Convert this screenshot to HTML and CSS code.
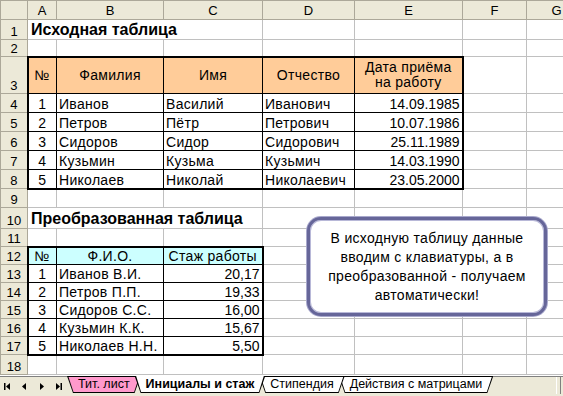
FILE: index.html
```html
<!DOCTYPE html>
<html lang="ru">
<head>
    <meta charset="UTF-8">
    <title>Инициалы и стаж</title>
    <link rel="stylesheet" href="styles.css">
</head>
<body>
    <div class="sheet">
        <table class="grid">
            <colgroup>
                <col class="w-hdr"><col class="w-a"><col class="w-b"><col class="w-c">
                <col class="w-d"><col class="w-e"><col class="w-f"><col class="w-g">
            </colgroup>
            <tr class="h19">
                <th class="corner"></th>
                <th class="colh">A</th><th class="colh">B</th><th class="colh">C</th>
                <th class="colh">D</th><th class="colh">E</th><th class="colh">F</th><th class="colh">G</th>
            </tr>
            <tr class="h20">
                <th class="rowh">1</th>
                <td colspan="3" class="title">Исходная таблица</td>
                <td></td><td></td><td></td><td></td>
            </tr>
            <tr class="h17">
                <th class="rowh">2</th>
                <td></td><td></td><td></td><td></td><td></td><td></td><td></td>
            </tr>
            <tr class="h37">
                <th class="rowh">3</th>
                <td class="t head1 top left">№</td>
                <td class="t head1 top">Фамилия</td>
                <td class="t head1 top">Имя</td>
                <td class="t head1 top">Отчество</td>
                <td class="t head1 top right two">Дата приёма<br>на работу</td>
                <td></td><td></td>
            </tr>
            <tr class="h19">
                <th class="rowh">4</th>
                <td class="t num left">1</td><td class="t">Иванов</td><td class="t">Василий</td>
                <td class="t">Иванович</td><td class="t val right">14.09.1985</td><td></td><td></td>
            </tr>
            <tr class="h19">
                <th class="rowh">5</th>
                <td class="t num left">2</td><td class="t">Петров</td><td class="t">Пётр</td>
                <td class="t">Петрович</td><td class="t val right">10.07.1986</td><td></td><td></td>
            </tr>
            <tr class="h19">
                <th class="rowh">6</th>
                <td class="t num left">3</td><td class="t">Сидоров</td><td class="t">Сидор</td>
                <td class="t">Сидорович</td><td class="t val right">25.11.1989</td><td></td><td></td>
            </tr>
            <tr class="h19">
                <th class="rowh">7</th>
                <td class="t num left">4</td><td class="t">Кузьмин</td><td class="t">Кузьма</td>
                <td class="t">Кузьмич</td><td class="t val right">14.03.1990</td><td></td><td></td>
            </tr>
            <tr class="h19">
                <th class="rowh">8</th>
                <td class="t num left bottom">5</td><td class="t bottom">Николаев</td><td class="t bottom">Николай</td>
                <td class="t bottom">Николаевич</td><td class="t val right bottom">23.05.2000</td><td></td><td></td>
            </tr>
            <tr class="h19">
                <th class="rowh">9</th>
                <td></td><td></td><td></td><td></td><td></td><td></td><td></td>
            </tr>
            <tr class="h21">
                <th class="rowh">10</th>
                <td colspan="3" class="title">Преобразованная таблица</td>
                <td></td><td></td><td></td><td></td>
            </tr>
            <tr class="h18">
                <th class="rowh">11</th>
                <td></td><td></td><td></td><td></td><td></td><td></td><td></td>
            </tr>
            <tr class="h18">
                <th class="rowh">12</th>
                <td class="t head2 top left">№</td>
                <td class="t head2 top">Ф.И.О.</td>
                <td class="t head2 top right">Стаж работы</td>
                <td></td><td></td><td></td><td></td>
            </tr>
            <tr class="h18">
                <th class="rowh">13</th>
                <td class="t num left">1</td><td class="t">Иванов В.И.</td><td class="t val right">20,17</td>
                <td></td><td></td><td></td><td></td>
            </tr>
            <tr class="h18">
                <th class="rowh">14</th>
                <td class="t num left">2</td><td class="t">Петров П.П.</td><td class="t val right">19,33</td>
                <td></td><td></td><td></td><td></td>
            </tr>
            <tr class="h18">
                <th class="rowh">15</th>
                <td class="t num left">3</td><td class="t">Сидоров С.С.</td><td class="t val right">16,00</td>
                <td></td><td></td><td></td><td></td>
            </tr>
            <tr class="h18">
                <th class="rowh">16</th>
                <td class="t num left">4</td><td class="t">Кузьмин К.К.</td><td class="t val right">15,67</td>
                <td></td><td></td><td></td><td></td>
            </tr>
            <tr class="h18">
                <th class="rowh">17</th>
                <td class="t num left bottom">5</td><td class="t bottom">Николаев Н.Н.</td><td class="t val right bottom">5,50</td>
                <td></td><td></td><td></td><td></td>
            </tr>
            <tr class="h20">
                <th class="rowh">18</th>
                <td></td><td></td><td></td><td></td><td></td><td></td><td></td>
            </tr>
        </table>

        <div class="callout">
            В исходную таблицу данные<br>
            вводим с клавиатуры, а в<br>
            преобразованной - получаем<br>
            автоматически!
        </div>
    </div>

    <div class="tabbar">
        <div class="nav">
            <svg width="9" height="9" viewBox="0 0 9 9"><rect x="1" y="1" width="1.5" height="7" fill="#000"/><path d="M7 1 L3 4.5 L7 8 Z" fill="#000"/></svg>
            <svg width="9" height="9" viewBox="0 0 9 9"><path d="M6 1 L2 4.5 L6 8 Z" fill="#000"/></svg>
            <svg width="9" height="9" viewBox="0 0 9 9"><path d="M3 1 L7 4.5 L3 8 Z" fill="#000"/></svg>
            <svg width="9" height="9" viewBox="0 0 9 9"><path d="M2 1 L6 4.5 L2 8 Z" fill="#000"/><rect x="6.5" y="1" width="1.5" height="7" fill="#000"/></svg>
        </div>
        <div class="tabs">
            <div class="tab pink z4">Тит. лист</div>
            <div class="tab active">Инициалы и стаж</div>
            <div class="tab z2">Стипендия</div>
            <div class="tab z1">Действия с матрицами</div>
        </div>
        <div class="splitter"></div>
    </div>
</body>
</html>
```

FILE: styles.css
```css
html, body {
    margin: 0;
    width: 563px;
    height: 396px;
    overflow: hidden;
    background-color: white;
    font-family: "Liberation Sans", Arial, sans-serif;
    font-size: 13px;
    color: black;
}
.sheet {
    position: relative;
    height: 376px;
    overflow: hidden;
}
.grid {
    border-collapse: collapse;
    table-layout: fixed;
    width: 586px;
}
.w-hdr { width: 27px; }
.w-a { width: 29px; }
.w-b { width: 107px; }
.w-c { width: 99px; }
.w-d { width: 92px; }
.w-e { width: 108px; }
.w-f { width: 64px; }
.w-g { width: 60px; }

.h17 { height: 17px; }
.h18 { height: 18px; }
.h19 { height: 19px; }
.h20 { height: 20px; }
.h21 { height: 21px; }
.h37 { height: 37px; }

td, th {
    border: 1px solid #c0c0c0;
    padding: 0 2px;
    white-space: nowrap;
    overflow: hidden;
    line-height: 15px;
    vertical-align: bottom;
    font-weight: normal;
}
td {
    font-size: 14px;
    letter-spacing: 0.3px;
}
.corner, .colh, .rowh {
    background-color: #ece9d8;
    border-color: #aca899;
    text-align: center;
}
.colh {
    vertical-align: middle;
}
.title {
    font-weight: bold;
    font-size: 16px;
    letter-spacing: 0;
    line-height: 18px;
    padding-left: 3px;
}

/* table borders */
.t { border: 1px solid black; }
.t.top { border-top: 2px solid black; }
.t.bottom { border-bottom: 2px solid black; }
.t.left { border-left: 2px solid black; }
.t.right { border-right: 2px solid black; }

.head1 {
    background-color: #ffcc99;
    text-align: center;
    vertical-align: middle;
}
.head1.two { line-height: 15px; }
.head2 {
    background-color: #ccffff;
    text-align: center;
}
.num { text-align: center; }
.val {
    text-align: right;
    letter-spacing: 0;
}

.callout {
    position: absolute;
    left: 307px;
    top: 217px;
    width: 234px;
    height: 93px;
    border: 3px solid #666699;
    border-radius: 14px;
    box-shadow: 0 0 0 1px #a8a8cc, inset 0 0 0 1px #b8b8d8;
    background-color: white;
    display: flex;
    align-items: center;
    justify-content: center;
    text-align: center;
    font-size: 14px;
    letter-spacing: 0.3px;
    line-height: 19px;
}

/* sheet tabs */
.tabbar {
    display: flex;
    height: 20px;
    background-color: #ece9d8;
    border-top: 1px solid #808080;
    box-sizing: border-box;
    font-family: "Liberation Sans", Tahoma, sans-serif;
    font-size: 12.5px;
}
.nav {
    display: flex;
    align-items: center;
    gap: 8px;
    width: 64px;
    padding-left: 3px;
    box-sizing: border-box;
}
.tabs {
    display: flex;
    height: 17px;
    margin-top: -1px;
}
.tab {
    position: relative;
    padding: 0 11px;
    line-height: 17px;
    margin-left: -6px;
    z-index: 3;
}
.tab::before, .tab::after {
    content: "";
    position: absolute;
    inset: 0;
    z-index: -1;
}
.tab::before {
    background-color: black;
    clip-path: polygon(0 0, 100% 0, calc(100% - 6px) 100%, 6px 100%);
}
.tab::after {
    background-color: white;
    clip-path: polygon(1.5px 1px, calc(100% - 1.5px) 1px, calc(100% - 6.5px) calc(100% - 1px), 6.5px calc(100% - 1px));
}
.tab.pink::after { background-color: #ff99cc; }
.tab.active {
    font-weight: bold;
    z-index: 9;
}
.tab.active::after {
    clip-path: polygon(1.5px 0, calc(100% - 1.5px) 0, calc(100% - 6.5px) calc(100% - 1px), 6.5px calc(100% - 1px));
}
.z4 { z-index: 4; }
.z2 { z-index: 2; }
.z1 { z-index: 1; }
.tab:first-child { margin-left: 3px; }
.splitter {
    margin-left: auto;
    margin-right: 2px;
    width: 3px;
    height: 17px;
    border-left: 1px solid white;
    border-right: 1px solid #808080;
    background-color: #ece9d8;
}
```
